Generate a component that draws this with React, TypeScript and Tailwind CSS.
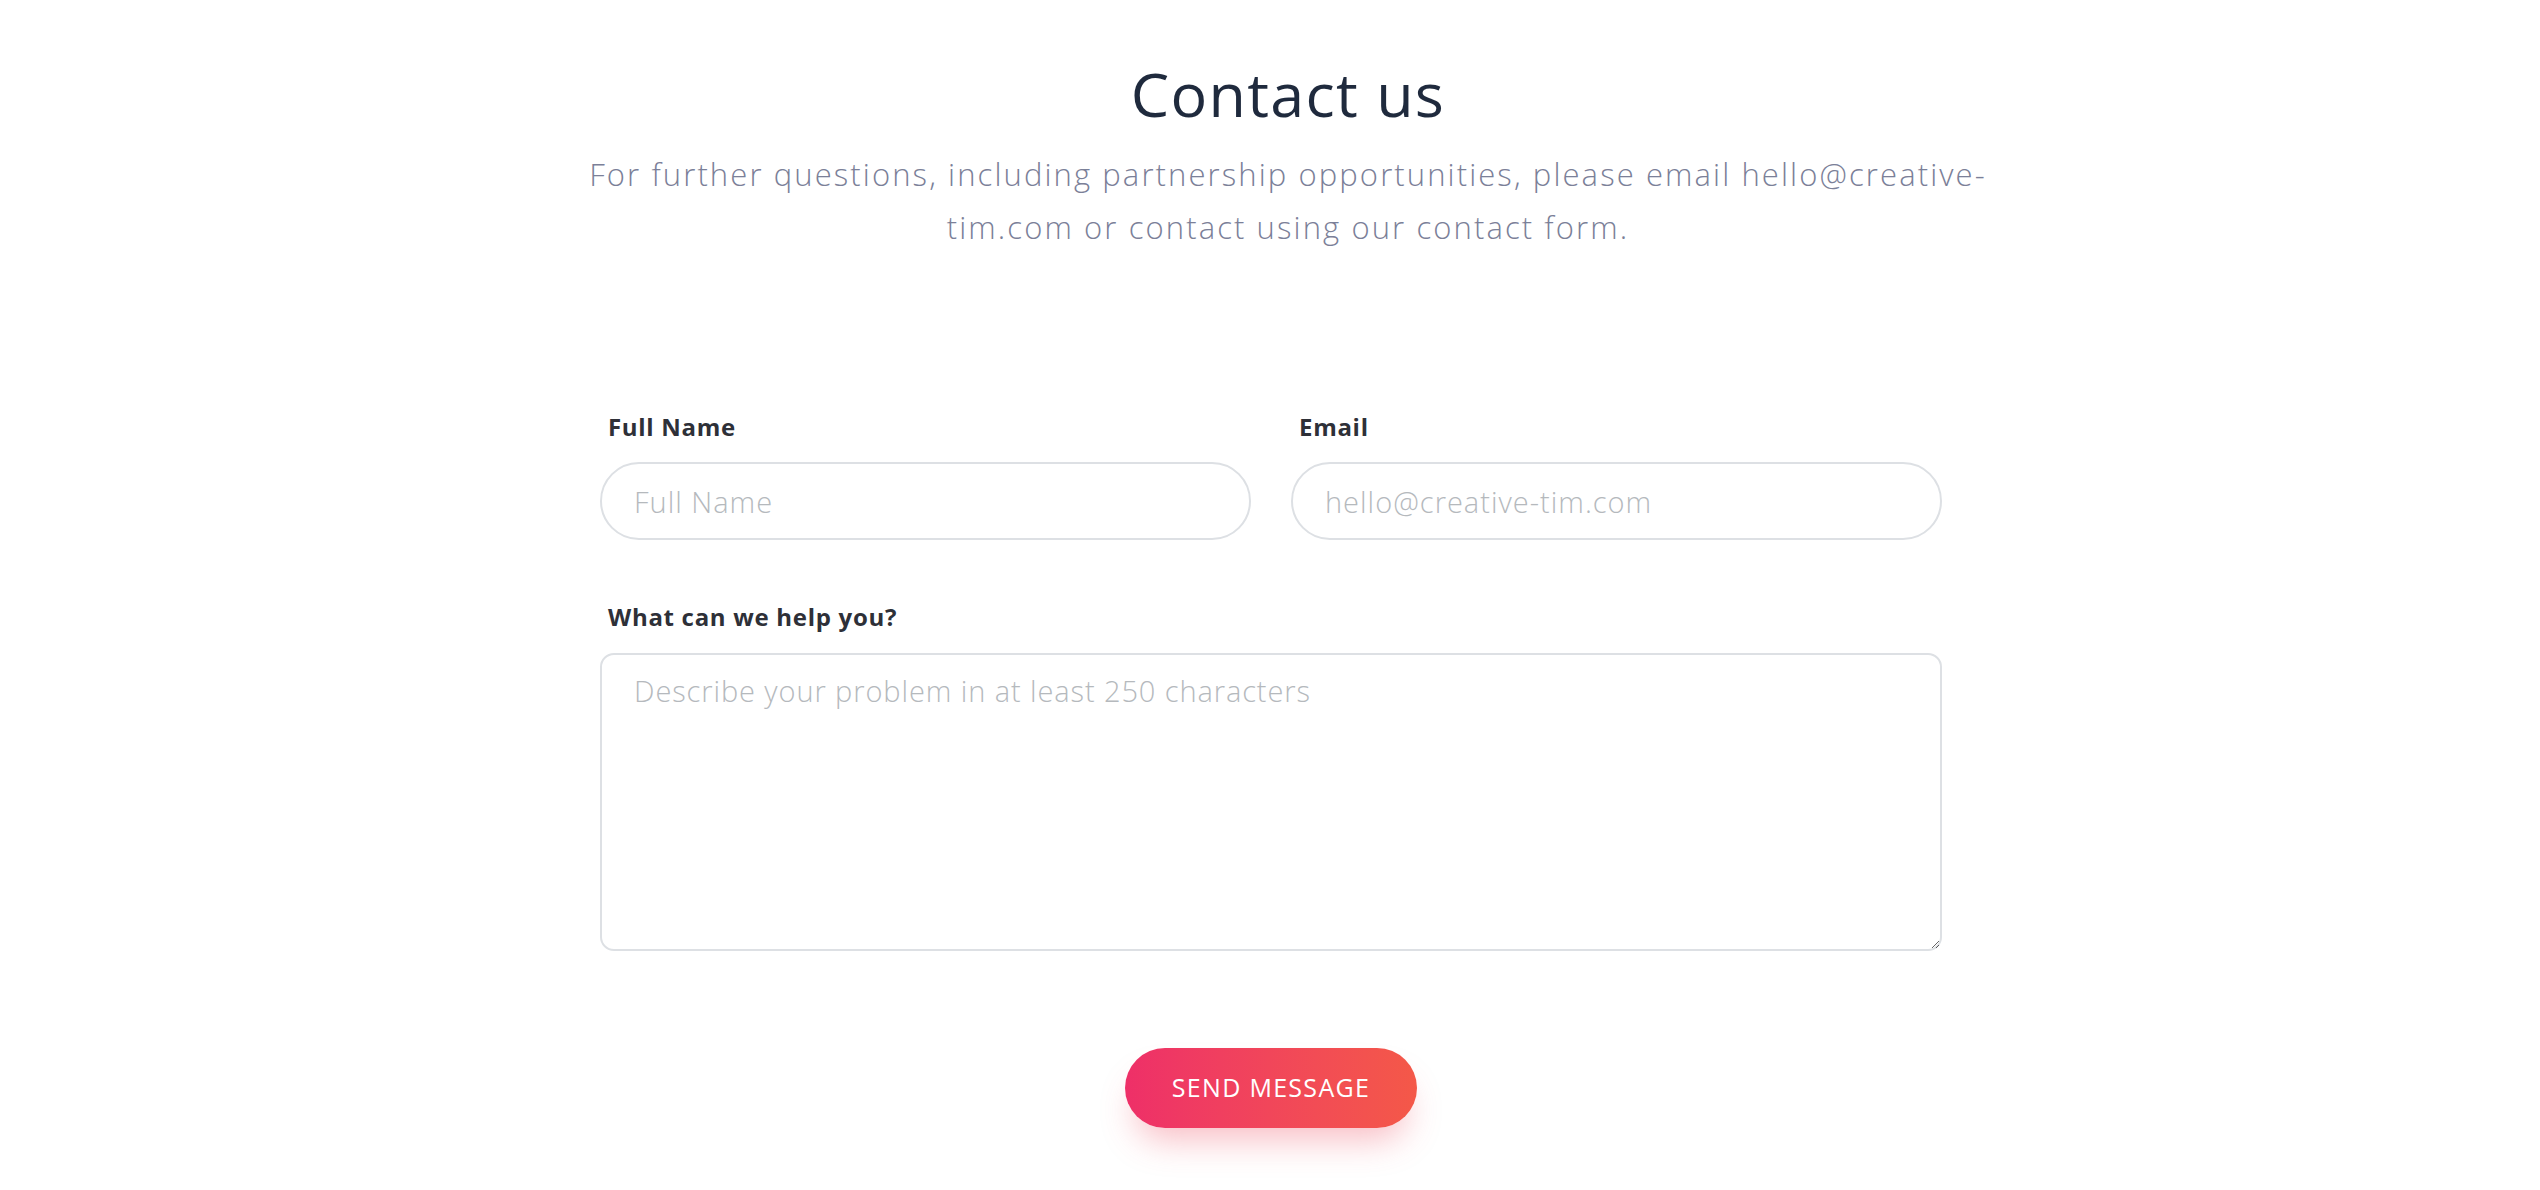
const font = { fontFamily: '"Open Sans", "Noto Sans", sans-serif' };

const fields = [
  { label: 'Full Name', placeholder: 'Full Name', type: 'text' },
  { label: 'Email', placeholder: 'hello@creative-tim.com', type: 'email' },
];

export default function App() {
  return (
    <div className="min-h-screen bg-white" style={font}>
      <div className="pt-[58px] pl-[36px] text-center">
        <h1 className="text-[61px] leading-[72px] font-normal text-[#1f2a3d] tracking-[1.3px]">
          Contact us
        </h1>
        <p className="mt-[18px] text-[31px] leading-[53px] font-light text-[#7b8098] tracking-[2.1px]">
          For further questions, including partnership opportunities, please email hello@creative-
          <br />
          tim.com or contact using our contact form.
        </p>
      </div>

      <form className="mx-auto mt-[158px] w-[1344px] pl-[2px]">
        <div className="grid grid-cols-2 gap-x-[40px]">
          {fields.map((f) => (
            <div key={f.label} className="flex flex-col">
              <label className="pl-[8px] text-[24px] leading-[30px] font-bold text-[#2e3038] tracking-[0.7px]">{f.label}</label>
              <input
                type={f.type}
                placeholder={f.placeholder}
                className="mt-[20px] h-[78px] rounded-full border-2 border-[#dde0e4] px-[32px] text-[29px] font-light text-[#495057] placeholder:text-[#b5b9bd] tracking-[1px] outline-none"
              />
            </div>
          ))}
        </div>

        <div className="mt-[62px] flex flex-col">
          <label className="pl-[8px] text-[24px] leading-[30px] font-bold text-[#2e3038] tracking-[0.7px]">What can we help you?</label>
          <textarea
            placeholder="Describe your problem in at least 250 characters"
            className="mt-[21px] h-[298px] resize-y rounded-[14px] border-2 border-[#dde0e4] px-[32px] pt-[15px] text-[29px] leading-[42px] font-light text-[#495057] placeholder:text-[#b5b9bd] tracking-[0.9px] outline-none"
          />
        </div>

        <div className="mt-[97px] flex justify-center">
          <button
            type="button"
            className="h-[80px] w-[292px] rounded-full bg-gradient-to-r from-[#ee2f68] to-[#f45848] text-[25px] font-normal uppercase tracking-[1.3px] text-white shadow-[0_22px_34px_-10px_rgba(236,70,90,0.35)]"
          >
            Send Message
          </button>
        </div>
      </form>
    </div>
  );
}
